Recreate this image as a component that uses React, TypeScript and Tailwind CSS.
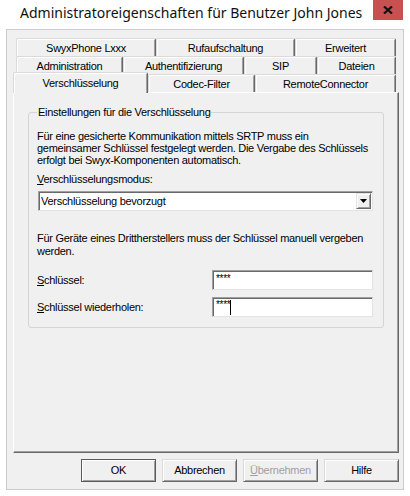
import React from "react";

type Tab = { label: string; w: number };

const row1: Tab[] = [
  { label: "SwyxPhone Lxxx", w: 140 },
  { label: "Rufaufschaltung", w: 139 },
  { label: "Erweitert", w: 101 },
];
const row2: Tab[] = [
  { label: "Administration", w: 107 },
  { label: "Authentifizierung", w: 121 },
  { label: "SIP", w: 73 },
  { label: "Dateien", w: 79 },
];

function TabButton({ tab, extra = "" }: { tab: Tab; extra?: string }) {
  return (
    <div
      style={{ width: tab.w }}
      className={`h-[18px] shrink-0 flex items-center justify-center pt-[1px] bg-[#f0f0f0] border-t border-l border-[#dadada] border-r border-r-[#696969] rounded-t-[2px] shadow-[inset_1px_1px_0_#ffffff,inset_-1px_0_0_#a0a0a0] whitespace-nowrap ${extra}`}
    >
      {tab.label}
    </div>
  );
}

function Button({
  children,
  primary = false,
  disabled = false,
}: {
  children: React.ReactNode;
  primary?: boolean;
  disabled?: boolean;
}) {
  return (
    <div
      className={`w-[75px] h-[23px] flex items-center justify-center bg-[#f0f0f0] ${
        primary
          ? "border border-[#5a5a5a] shadow-[inset_1px_1px_0_#ffffff,inset_-1px_-1px_0_#a0a0a0]"
          : "border border-t-[#dadada] border-l-[#dadada] border-r-[#696969] border-b-[#696969] shadow-[inset_1px_1px_0_#ffffff,inset_-1px_-1px_0_#a0a0a0]"
      } ${disabled ? "text-[#a0a0a0]" : "text-black"}`}
    >
      {children}
    </div>
  );
}

function Sunken({ className = "", children }: { className?: string; children?: React.ReactNode }) {
  return (
    <div
      className={`bg-white border border-t-[#a0a0a0] border-l-[#a0a0a0] border-r-[#e3e3e3] border-b-[#e3e3e3] shadow-[inset_1px_1px_0_#696969] ${className}`}
    >
      {children}
    </div>
  );
}

export default function App() {
  return (
    <div className="w-[410px] h-[496px] bg-white flex flex-col overflow-hidden font-['Liberation_Sans',Arial,sans-serif] text-[11px] leading-[13px] tracking-[-0.28px] text-black">
      {/* title bar */}
      <div className="h-[29px] shrink-0 flex items-start">
        <div className="pl-[20px] pt-[3px] text-[14px] leading-[20px] tracking-normal font-['Noto_Sans',sans-serif] text-[#111] whitespace-nowrap">
          Administratoreigenschaften für Benutzer John Jones
        </div>
        <div className="ml-auto mr-[7px] w-[30px] h-[20px] shrink-0 bg-[#c75050] flex items-center justify-center">
          <svg width="10" height="8" viewBox="0 0 10 8">
            <path d="M1 0.5 L9 7.5 M9 0.5 L1 7.5" stroke="#111" strokeWidth="2.2" />
          </svg>
        </div>
      </div>

      {/* client area */}
      <div className="mx-[6px] h-[461px] shrink-0 bg-[#f0f0f0] border border-[#c9ccd1] flex flex-col pl-[6px] pt-[8px]">
        {/* tab rows */}
        <div className="flex ml-[3px]">
          {row1.map((t) => (
            <TabButton key={t.label} tab={t} />
          ))}
        </div>
        <div className="flex ml-[3px]">
          {row2.map((t) => (
            <TabButton key={t.label} tab={t} />
          ))}
        </div>
        <div className="flex items-end h-[19px] -mb-px relative z-10">
          <div className="w-[135px] h-[21px] shrink-0 flex items-center justify-center bg-[#f0f0f0] border-t border-l border-[#dadada] border-r border-r-[#696969] rounded-t-[2px] shadow-[inset_1px_1px_0_#ffffff,inset_-1px_0_0_#a0a0a0]">
            Verschlüsselung
          </div>
          <TabButton tab={{ label: "Codec-Filter", w: 107 }} extra="mb-[1px]" />
          <TabButton tab={{ label: "RemoteConnector", w: 141 }} extra="mb-[1px]" />
        </div>

        {/* tab page */}
        <div className="w-[386px] h-[361px] shrink-0 border border-t-[#ffffff] border-l-[#ffffff] border-r-[#696969] border-b-[#696969] shadow-[inset_-1px_-1px_0_#a0a0a0] pl-[14px] pt-[13px]">
          <fieldset className="w-[356px] border border-[#d5d5d5] rounded-[3px] pl-[8px] pr-[10px] pb-[10px]">
            <legend className="px-[1px] leading-[13px]">Einstellungen für die Verschlüsselung</legend>
            <p className="mt-[11px] leading-[12px] whitespace-nowrap">
              Für eine gesicherte Kommunikation mittels SRTP muss ein
              <br />
              gemeinsamer Schlüssel festgelegt werden. Die Vergabe des Schlüssels
              <br />
              erfolgt bei Swyx-Komponenten automatisch.
            </p>
            <div className="mt-[7px] leading-[12px]">
              <span className="underline underline-offset-[1px]">V</span>erschlüsselungsmodus:
            </div>
            <Sunken className="mt-[6px] ml-[1px] w-[335px] h-[20px] flex items-center">
              <span className="pl-[2px] pt-[1px]">Verschlüsselung bevorzugt</span>
              <div className="ml-auto mr-[1px] w-[15px] h-[16px] bg-[#f0f0f0] border border-t-[#e3e3e3] border-l-[#e3e3e3] border-r-[#696969] border-b-[#696969] shadow-[inset_1px_1px_0_#ffffff,inset_-1px_-1px_0_#a0a0a0] flex items-center justify-center">
                <svg width="7" height="4" viewBox="0 0 7 4">
                  <path d="M0 0 H7 L3.5 4 Z" fill="#000" />
                </svg>
              </div>
            </Sunken>
            <p className="mt-[21px] leading-[13px] whitespace-nowrap">
              Für Geräte eines Drittherstellers muss der Schlüssel manuell vergeben
              <br />
              werden.
            </p>
            <div className="mt-[12px] flex items-center">
              <span>
                <span className="underline underline-offset-[1px]">S</span>chlüssel:
              </span>
              <Sunken className="ml-auto w-[161px] h-[20px] pl-[3px] pt-[1px]">
                <span className="text-[10px] leading-[12px]">****</span>
              </Sunken>
            </div>
            <div className="mt-[7px] flex items-center">
              <span>
                <span className="underline underline-offset-[1px]">S</span>chlüssel wiederholen:
              </span>
              <Sunken className="ml-auto w-[161px] h-[20px] pl-[3px] pt-[1px] flex items-start">
                <span className="text-[10px] leading-[12px]">****</span>
                <span className="w-px h-[15px] bg-black mt-[1px]" />
              </Sunken>
            </div>
          </fieldset>
        </div>

        {/* dialog buttons */}
        <div className="mt-[6px] ml-[68px] flex gap-[6px]">
          <Button primary>OK</Button>
          <Button>Abbrechen</Button>
          <Button disabled>
            <span>
              <span className="underline underline-offset-[1px]">Ü</span>bernehmen
            </span>
          </Button>
          <Button>Hilfe</Button>
        </div>
      </div>
    </div>
  );
}
